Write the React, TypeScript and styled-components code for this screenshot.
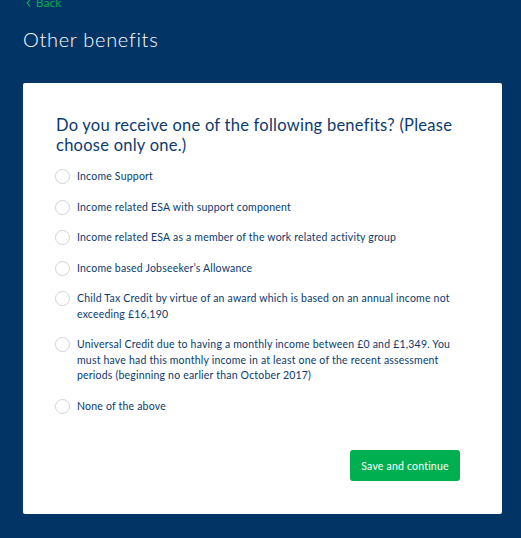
import styled, { createGlobalStyle } from "styled-components";

const GlobalStyle = createGlobalStyle`
  html, body {
    margin: 0;
    padding: 0;
    background: #033466;
  }
  body {
    font-family: Lato, "Liberation Sans", Arial, sans-serif;
  }
`;

const Page = styled.div`
  min-height: 538px;
  padding: 0 19px 24px 23px;
  box-sizing: border-box;
`;

const BackLink = styled.a`
  display: flex;
  align-items: center;
  gap: 5px;
  margin-top: -4px;
  padding-left: 3px;
  height: 14px;
  color: #00b050;
  font-size: 11.5px;
  line-height: 14px;
  letter-spacing: 0.3px;
  text-decoration: none;
`;

const Chevron = styled.svg`
  width: 5px;
  height: 8px;
  flex: none;
`;

const Title = styled.h1`
  margin: 17px 0 0;
  color: #ffffff;
  font-size: 20px;
  line-height: 24px;
  font-weight: 300;
  letter-spacing: 0.7px;
`;

const Card = styled.div`
  margin-top: 32px;
  background: #ffffff;
  border-radius: 2px;
  padding: 32px 42px 33px 33px;
`;

const Question = styled.h2`
  margin: 0 0 14px;
  color: #0b3a6e;
  font-size: 16.5px;
  line-height: 20px;
  font-weight: 400;
  letter-spacing: 0.25px;
`;

const Options = styled.div`
  display: flex;
  flex-direction: column;
  gap: 15px;
`;

const Option = styled.label`
  display: flex;
  align-items: flex-start;
  gap: 7px;
  cursor: pointer;
`;

const Radio = styled.span`
  flex: none;
  width: 13px;
  height: 13px;
  margin-left: -1px;
  border: 1px solid #cfd3d8;
  border-radius: 50%;
  box-sizing: content-box;
  background: #fff;
`;

const OptionText = styled.span`
  color: #0b3a6e;
  font-size: 10.5px;
  line-height: 15.5px;
  letter-spacing: 0.2px;
`;

const Footer = styled.div`
  display: flex;
  justify-content: flex-end;
  margin-top: 36px;
`;

const PrimaryButton = styled.button`
  width: 110px;
  height: 31px;
  border: none;
  border-radius: 3px;
  background: #00b050;
  color: #ffffff;
  font-family: inherit;
  font-size: 10.5px;
  letter-spacing: 0.2px;
  cursor: pointer;
`;

const options = [
  "Income Support",
  "Income related ESA with support component",
  "Income related ESA as a member of the work related activity group",
  "Income based Jobseeker\u2019s Allowance",
  "Child Tax Credit by virtue of an award which is based on an annual income not exceeding \u00a316,190",
  "Universal Credit due to having a monthly income between \u00a30 and \u00a31,349. You must have had this monthly income in at least one of the recent assessment periods (beginning no earlier than October 2017)",
  "None of the above",
];

export default function App() {
  return (
    <>
      <GlobalStyle />
      <Page>
        <BackLink href="#">
          <Chevron viewBox="0 0 5 8">
            <path d="M4.2 0.6 L1 4 L4.2 7.4" fill="none" stroke="currentColor" strokeWidth="1.1" />
          </Chevron>
          Back
        </BackLink>
        <Title>Other benefits</Title>
        <Card>
          <Question>Do you receive one of the following benefits? (Please choose only one.)</Question>
          <Options>
            {options.map((text) => (
              <Option key={text}>
                <Radio />
                <OptionText>{text}</OptionText>
              </Option>
            ))}
          </Options>
          <Footer>
            <PrimaryButton>Save and continue</PrimaryButton>
          </Footer>
        </Card>
      </Page>
    </>
  );
}
